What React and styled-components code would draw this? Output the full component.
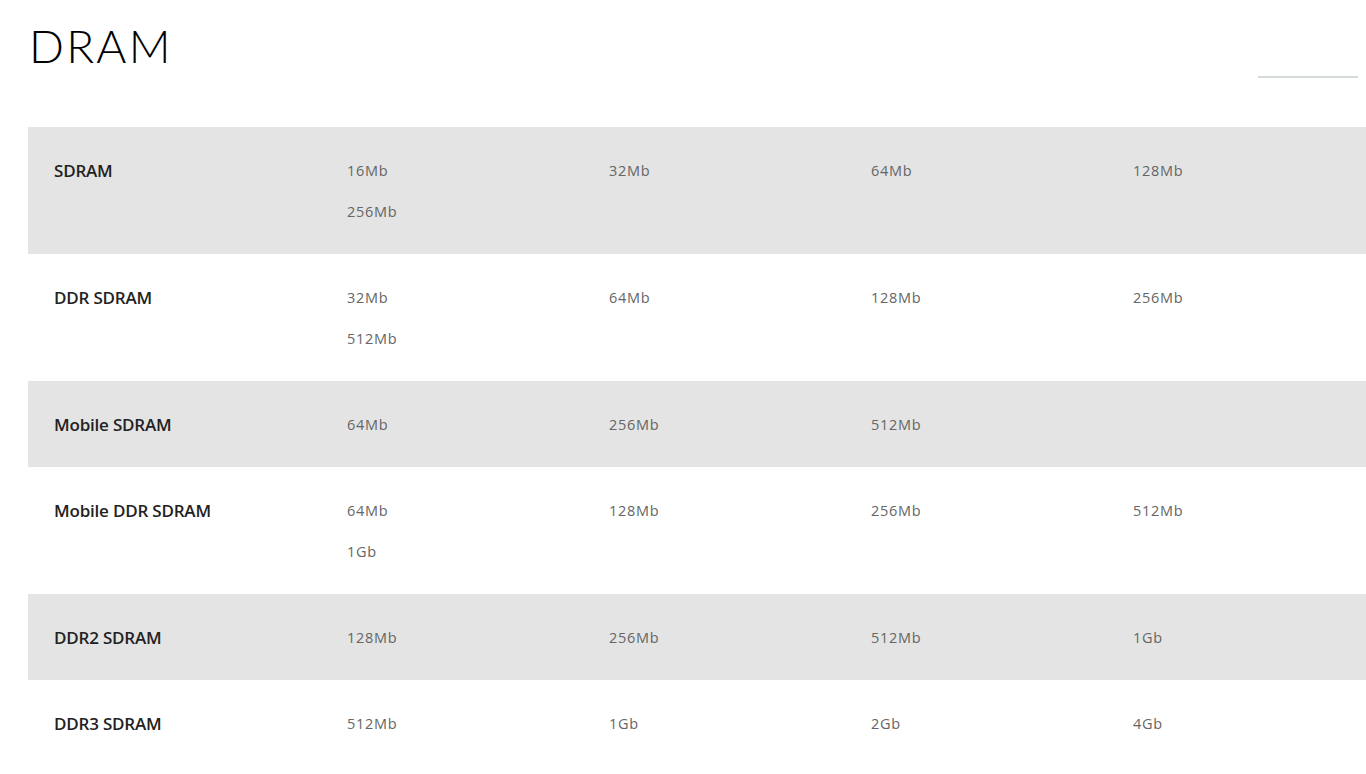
import React from "react";
import styled, { createGlobalStyle } from "styled-components";

const GlobalStyle = createGlobalStyle`
  html, body {
    margin: 0;
    padding: 0;
    background: #ffffff;
    overflow-x: hidden;
  }
  body {
    font-family: "Open Sans", "Noto Sans", sans-serif;
  }
`;

const products = [
  { name: "SDRAM", sizes: ["16Mb", "32Mb", "64Mb", "128Mb", "256Mb"] },
  { name: "DDR SDRAM", sizes: ["32Mb", "64Mb", "128Mb", "256Mb", "512Mb"] },
  { name: "Mobile SDRAM", sizes: ["64Mb", "256Mb", "512Mb"] },
  { name: "Mobile DDR SDRAM", sizes: ["64Mb", "128Mb", "256Mb", "512Mb", "1Gb"] },
  { name: "DDR2 SDRAM", sizes: ["128Mb", "256Mb", "512Mb", "1Gb"] },
  { name: "DDR3 SDRAM", sizes: ["512Mb", "1Gb", "2Gb", "4Gb"] },
];

const App = () => {
  return (
    <>
      <GlobalStyle />
      <Page>
        <Header>
          <Title>DRAM</Title>
          <Rule />
        </Header>
        <Table>
          {products.map((p, i) => (
            <Row key={p.name} $shaded={i % 2 === 0}>
              <Name>{p.name}</Name>
              <Sizes>
                {p.sizes.map((s) => (
                  <Size key={s}>{s}</Size>
                ))}
              </Sizes>
            </Row>
          ))}
        </Table>
      </Page>
    </>
  );
};

export default App;

const Page = styled.div`
  width: 1366px;
  padding-left: 28px;
  box-sizing: border-box;
`;

const Header = styled.div`
  display: flex;
  justify-content: space-between;
  align-items: flex-start;
  height: 127px;
`;

const Title = styled.h1`
  margin: 0;
  padding-top: 18px;
  padding-left: 1px;
  font-family: "Lato", "DejaVu Sans", sans-serif;
  font-weight: 300;
  font-size: 46px;
  line-height: 56px;
  letter-spacing: 2.2px;
  color: #000;
`;

const Rule = styled.div`
  width: 100px;
  height: 2px;
  margin-top: 76px;
  margin-right: 8px;
  background: #d5dadd;
`;

const Table = styled.div`
  width: 1338px;
  display: flex;
  flex-direction: column;
`;

const Row = styled.div`
  display: flex;
  align-items: flex-start;
  padding: 23px 0 22px;
  background: ${(p) => (p.$shaded ? "#e4e4e4" : "#ffffff")};
`;

const Name = styled.div`
  width: 293px;
  flex: none;
  padding-left: 26px;
  font-family: "Open Sans", "Noto Sans", sans-serif;
  font-weight: 600;
  font-size: 17px;
  line-height: 41px;
  letter-spacing: -0.2px;
  color: #222;
`;

const Sizes = styled.div`
  display: grid;
  grid-template-columns: repeat(4, 262px);
  grid-auto-rows: 41px;
  flex: none;
`;

const Size = styled.div`
  font-family: "Open Sans", "Noto Sans", sans-serif;
  font-size: 14.5px;
  line-height: 41px;
  letter-spacing: 0.7px;
  color: #666;
`;
